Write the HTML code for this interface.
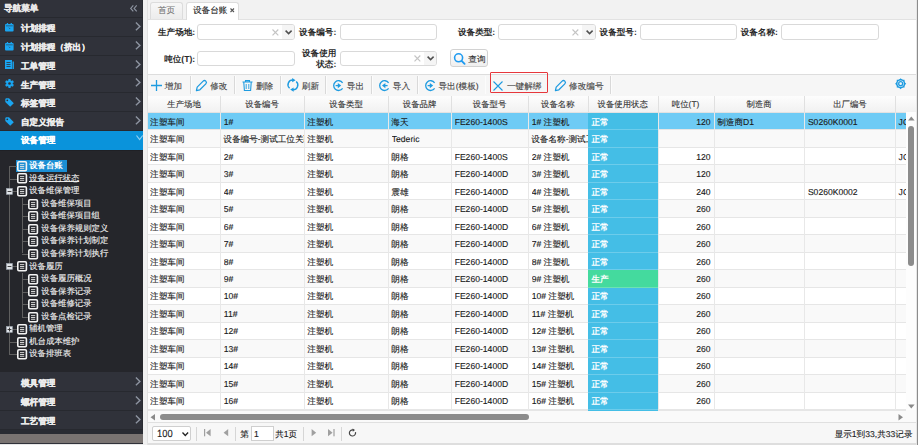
<!DOCTYPE html><html><head><meta charset="utf-8"><style>
*{box-sizing:border-box;margin:0;padding:0}
html,body{width:918px;height:445px;overflow:hidden;background:#fff}
body{position:relative;-webkit-text-stroke:0.12px currentColor;font-family:"Liberation Sans",sans-serif;font-size:8.6px;text-rendering:geometricPrecision;color:#222}
.ab{position:absolute}
.t{position:absolute;white-space:nowrap;line-height:10px}
.b{font-weight:bold;-webkit-text-stroke:0}
svg{position:absolute;overflow:visible}
</style></head><body>
<div class="ab" style="left:0px;top:0px;width:143px;height:445px;background:#30323a"></div>
<div class="ab" style="left:141.9px;top:0px;width:1.1px;height:445px;background:#2a2c32"></div>
<div class="ab" style="left:0px;top:17.4px;width:143px;height:1px;background:#27292f"></div>
<div class="t" style="left:4px;top:3.1px;color:#e9e9e9;font-weight:bold;-webkit-text-stroke:0.25px #e9e9e9">导航菜单</div>
<svg style="left:130px;top:5px;" width="8" height="7" viewBox="0 0 8 7"><path d="M3.3 0.4 L0.7 3.4 L3.3 6.4 M6.7 0.4 L4.1 3.4 L6.7 6.4" fill="none" stroke="#8d94a1" stroke-width="1.15"/></svg>
<div class="ab" style="left:0px;top:35.900000000000006px;width:143px;height:1px;background:#27292f"></div>
<svg style="left:4.8px;top:22.8px;" width="9" height="8" viewBox="0 0 9 8"><rect x="0" y="1" width="8.6" height="7.6" rx="1" fill="#1aa5f1"/><rect x="1.8" y="0" width="1.3" height="2" fill="#1aa5f1"/><rect x="5.6" y="0" width="1.3" height="2" fill="#1aa5f1"/><rect x="0.8" y="2.6" width="7" height="0.6" fill="#30323a"/><path d="M4 4.8 L5 5.8" stroke="#30323a" stroke-width="0.8"/></svg>
<div class="t" style="left:21px;top:23.1px;color:#ececec;font-weight:bold;-webkit-text-stroke:0.25px #ececec">计划排程</div>
<svg style="left:135.1px;top:22.0px;" width="6" height="9" viewBox="0 0 6 9"><path d="M0.9 0.6 L4.9 4.4 L0.9 8.2" fill="none" stroke="#8d94a1" stroke-width="1.4"/></svg>
<div class="ab" style="left:0px;top:54.730000000000004px;width:143px;height:1px;background:#27292f"></div>
<svg style="left:4.8px;top:41.63px;" width="9" height="8" viewBox="0 0 9 8"><rect x="0" y="1" width="8.6" height="7.6" rx="1" fill="#1aa5f1"/><rect x="1.8" y="0" width="1.3" height="2" fill="#1aa5f1"/><rect x="5.6" y="0" width="1.3" height="2" fill="#1aa5f1"/><rect x="0.8" y="2.6" width="7" height="0.6" fill="#30323a"/><path d="M4 4.8 L5 5.8" stroke="#30323a" stroke-width="0.8"/></svg>
<div class="t" style="left:21px;top:41.93px;color:#ececec;font-weight:bold;-webkit-text-stroke:0.25px #ececec">计划排程（挤出）</div>
<svg style="left:135.1px;top:40.83px;" width="6" height="9" viewBox="0 0 6 9"><path d="M0.9 0.6 L4.9 4.4 L0.9 8.2" fill="none" stroke="#8d94a1" stroke-width="1.4"/></svg>
<div class="ab" style="left:0px;top:73.56px;width:143px;height:1px;background:#27292f"></div>
<svg style="left:4.8px;top:60.46px;" width="9" height="9" viewBox="0 0 9 9"><rect x="0" y="0" width="7" height="9" fill="#1aa5f1"/><rect x="7.5" y="1.5" width="1.4" height="7.5" fill="#1aa5f1"/><rect x="1.5" y="2" width="4" height="0.8" fill="#30323a"/><rect x="1.5" y="4" width="4" height="0.8" fill="#30323a"/><rect x="1.5" y="6" width="4" height="0.8" fill="#30323a"/></svg>
<div class="t" style="left:21px;top:60.76px;color:#ececec;font-weight:bold;-webkit-text-stroke:0.25px #ececec">工单管理</div>
<svg style="left:135.1px;top:59.66px;" width="6" height="9" viewBox="0 0 6 9"><path d="M0.9 0.6 L4.9 4.4 L0.9 8.2" fill="none" stroke="#8d94a1" stroke-width="1.4"/></svg>
<div class="ab" style="left:0px;top:92.39px;width:143px;height:1px;background:#27292f"></div>
<svg style="left:4.8px;top:79.29px;" width="9" height="9" viewBox="0 0 9 9"><g transform="translate(4.5,4.5)"><circle r="3.2" fill="#1aa5f1"/><rect x="-1.1" y="-4.5" width="2.2" height="2.5" fill="#1aa5f1" transform="rotate(0)"/><rect x="-1.1" y="-4.5" width="2.2" height="2.5" fill="#1aa5f1" transform="rotate(60)"/><rect x="-1.1" y="-4.5" width="2.2" height="2.5" fill="#1aa5f1" transform="rotate(120)"/><rect x="-1.1" y="-4.5" width="2.2" height="2.5" fill="#1aa5f1" transform="rotate(180)"/><rect x="-1.1" y="-4.5" width="2.2" height="2.5" fill="#1aa5f1" transform="rotate(240)"/><rect x="-1.1" y="-4.5" width="2.2" height="2.5" fill="#1aa5f1" transform="rotate(300)"/><circle r="1.3" fill="#30323a"/></g></svg>
<div class="t" style="left:21px;top:79.59px;color:#ececec;font-weight:bold;-webkit-text-stroke:0.25px #ececec">生产管理</div>
<svg style="left:135.1px;top:78.49000000000001px;" width="6" height="9" viewBox="0 0 6 9"><path d="M0.9 0.6 L4.9 4.4 L0.9 8.2" fill="none" stroke="#8d94a1" stroke-width="1.4"/></svg>
<div class="ab" style="left:0px;top:111.21999999999998px;width:143px;height:1px;background:#27292f"></div>
<svg style="left:4.8px;top:98.11999999999999px;" width="9" height="9" viewBox="0 0 9 9"><path d="M0.3 1 L0.3 4 L5.2 8.8 L8.8 5.2 L4 0.3 L1 0.3 Z" fill="#1aa5f1"/><circle cx="2.3" cy="2.3" r="0.9" fill="#30323a"/></svg>
<div class="t" style="left:21px;top:98.41999999999999px;color:#ececec;font-weight:bold;-webkit-text-stroke:0.25px #ececec">标签管理</div>
<svg style="left:135.1px;top:97.32px;" width="6" height="9" viewBox="0 0 6 9"><path d="M0.9 0.6 L4.9 4.4 L0.9 8.2" fill="none" stroke="#8d94a1" stroke-width="1.4"/></svg>
<div class="ab" style="left:0px;top:130.05px;width:143px;height:1px;background:#27292f"></div>
<svg style="left:4.8px;top:116.95px;" width="9" height="9" viewBox="0 0 9 9"><path d="M0.3 1 L0.3 4 L5.2 8.8 L8.8 5.2 L4 0.3 L1 0.3 Z" fill="#1aa5f1"/><circle cx="2.3" cy="2.3" r="0.9" fill="#30323a"/></svg>
<div class="t" style="left:21px;top:117.25px;color:#ececec;font-weight:bold;-webkit-text-stroke:0.25px #ececec">自定义报告</div>
<svg style="left:135.1px;top:116.15px;" width="6" height="9" viewBox="0 0 6 9"><path d="M0.9 0.6 L4.9 4.4 L0.9 8.2" fill="none" stroke="#8d94a1" stroke-width="1.4"/></svg>
<div class="ab" style="left:0px;top:130.7px;width:143px;height:18.9px;background:#0a93db"></div>
<div class="t" style="left:21px;top:135.3px;color:#fff;font-weight:bold;-webkit-text-stroke:0.25px #fff">设备管理</div>
<svg style="left:136.3px;top:134.8px;" width="8" height="6" viewBox="0 0 8 6"><path d="M0.5 0.5 L3.6 4.6 L6.7 0.5" fill="none" stroke="#8fd0f2" stroke-width="1.2"/></svg>
<div class="ab" style="left:0px;top:149.6px;width:143px;height:1.2px;background:#1f2025"></div>
<div class="ab" style="left:0px;top:150.8px;width:143px;height:221.7px;background:#25262b"></div>
<div class="ab" style="left:8.8px;top:166px;width:0.9px;height:188.39999999999998px;background:#5f5f5f"></div>
<div class="ab" style="left:21.8px;top:198px;width:0.9px;height:55.400000000000006px;background:#5f5f5f"></div>
<div class="ab" style="left:21.8px;top:272.9px;width:0.9px;height:43.700000000000045px;background:#5f5f5f"></div>
<div class="ab" style="left:16.2px;top:159.9px;width:50.6px;height:12.4px;background:#1b8ed3"></div>
<div class="ab" style="left:8.8px;top:166.0px;width:8.7px;height:0.9px;background:#5f5f5f"></div>
<svg style="left:17.2px;top:161.0px;" width="10" height="10.5" viewBox="0 0 10 10.5"><rect x="0.8" y="0.8" width="8.6" height="8.9" rx="1.1" fill="#1b8ed3" stroke="#f4f4f4" stroke-width="1.6"/><rect x="3" y="3.2" width="4.2" height="0.9" fill="#e6e6e6"/><rect x="3" y="5.0" width="4.2" height="0.9" fill="#e6e6e6"/><rect x="3" y="6.8" width="4.2" height="0.9" fill="#e6e6e6"/></svg>
<div class="t" style="left:29.2px;top:160.1px;color:#fff;font-weight:bold;font-size:8.4px;-webkit-text-stroke:0">设备台账</div>
<div class="ab" style="left:8.8px;top:178.55px;width:8.7px;height:0.9px;background:#5f5f5f"></div>
<svg style="left:17.0px;top:173.45px;" width="10" height="10.5" viewBox="0 0 10 10.5"><rect x="0.8" y="0.8" width="8.6" height="8.9" rx="1.1" fill="#25262b" stroke="#f4f4f4" stroke-width="1.6"/><rect x="3" y="3.2" width="4.2" height="0.9" fill="#e6e6e6"/><rect x="3" y="5.0" width="4.2" height="0.9" fill="#e6e6e6"/><rect x="3" y="6.8" width="4.2" height="0.9" fill="#e6e6e6"/></svg>
<div class="ab" style="left:29px;top:180.9px;width:49.6px;height:0.9px;background:#e8e8e8"></div>
<div class="t" style="left:29.2px;top:172.65px;color:#f0f0f0;font-size:8.4px">设备运行状态</div>
<div class="ab" style="left:8.8px;top:191.1px;width:8.7px;height:0.9px;background:#5f5f5f"></div>
<svg style="left:17.0px;top:185.99999999999997px;" width="10" height="10.5" viewBox="0 0 10 10.5"><rect x="0.8" y="0.8" width="8.6" height="8.9" rx="1.1" fill="#25262b" stroke="#f4f4f4" stroke-width="1.6"/><rect x="3" y="3.2" width="4.2" height="0.9" fill="#e6e6e6"/><rect x="3" y="5.0" width="4.2" height="0.9" fill="#e6e6e6"/><rect x="3" y="6.8" width="4.2" height="0.9" fill="#e6e6e6"/></svg>
<div class="t" style="left:29.2px;top:185.2px;color:#f0f0f0;font-size:8.4px">设备维保管理</div>
<svg style="left:6.2px;top:188.1px;" width="7" height="7" viewBox="0 0 7 7"><rect x="0.4" y="0.4" width="6" height="6" fill="#dfe3e8" stroke="#9aa3ad" stroke-width="0.6"/><rect x="1.6" y="3" width="3.8" height="0.9" fill="#333"/></svg>
<div class="ab" style="left:21.8px;top:203.65px;width:7.0px;height:0.9px;background:#5f5f5f"></div>
<svg style="left:28.3px;top:198.54999999999998px;" width="10" height="10.5" viewBox="0 0 10 10.5"><rect x="0.8" y="0.8" width="8.6" height="8.9" rx="1.1" fill="#25262b" stroke="#f4f4f4" stroke-width="1.6"/><rect x="3" y="3.2" width="4.2" height="0.9" fill="#e6e6e6"/><rect x="3" y="5.0" width="4.2" height="0.9" fill="#e6e6e6"/><rect x="3" y="6.8" width="4.2" height="0.9" fill="#e6e6e6"/></svg>
<div class="t" style="left:41.3px;top:197.75px;color:#f0f0f0;font-size:8.4px">设备维保项目</div>
<div class="ab" style="left:21.8px;top:216.2px;width:7.0px;height:0.9px;background:#5f5f5f"></div>
<svg style="left:28.3px;top:211.09999999999997px;" width="10" height="10.5" viewBox="0 0 10 10.5"><rect x="0.8" y="0.8" width="8.6" height="8.9" rx="1.1" fill="#25262b" stroke="#f4f4f4" stroke-width="1.6"/><rect x="3" y="3.2" width="4.2" height="0.9" fill="#e6e6e6"/><rect x="3" y="5.0" width="4.2" height="0.9" fill="#e6e6e6"/><rect x="3" y="6.8" width="4.2" height="0.9" fill="#e6e6e6"/></svg>
<div class="t" style="left:41.3px;top:210.29999999999998px;color:#f0f0f0;font-size:8.4px">设备维保项目组</div>
<div class="ab" style="left:21.8px;top:228.75px;width:7.0px;height:0.9px;background:#5f5f5f"></div>
<svg style="left:28.3px;top:223.64999999999998px;" width="10" height="10.5" viewBox="0 0 10 10.5"><rect x="0.8" y="0.8" width="8.6" height="8.9" rx="1.1" fill="#25262b" stroke="#f4f4f4" stroke-width="1.6"/><rect x="3" y="3.2" width="4.2" height="0.9" fill="#e6e6e6"/><rect x="3" y="5.0" width="4.2" height="0.9" fill="#e6e6e6"/><rect x="3" y="6.8" width="4.2" height="0.9" fill="#e6e6e6"/></svg>
<div class="t" style="left:41.3px;top:222.85px;color:#f0f0f0;font-size:8.4px">设备保养规则定义</div>
<div class="ab" style="left:21.8px;top:241.3px;width:7.0px;height:0.9px;background:#5f5f5f"></div>
<svg style="left:28.3px;top:236.2px;" width="10" height="10.5" viewBox="0 0 10 10.5"><rect x="0.8" y="0.8" width="8.6" height="8.9" rx="1.1" fill="#25262b" stroke="#f4f4f4" stroke-width="1.6"/><rect x="3" y="3.2" width="4.2" height="0.9" fill="#e6e6e6"/><rect x="3" y="5.0" width="4.2" height="0.9" fill="#e6e6e6"/><rect x="3" y="6.8" width="4.2" height="0.9" fill="#e6e6e6"/></svg>
<div class="t" style="left:41.3px;top:235.4px;color:#f0f0f0;font-size:8.4px">设备保养计划制定</div>
<div class="ab" style="left:21.8px;top:253.85000000000002px;width:7.0px;height:0.9px;background:#5f5f5f"></div>
<svg style="left:28.3px;top:248.75px;" width="10" height="10.5" viewBox="0 0 10 10.5"><rect x="0.8" y="0.8" width="8.6" height="8.9" rx="1.1" fill="#25262b" stroke="#f4f4f4" stroke-width="1.6"/><rect x="3" y="3.2" width="4.2" height="0.9" fill="#e6e6e6"/><rect x="3" y="5.0" width="4.2" height="0.9" fill="#e6e6e6"/><rect x="3" y="6.8" width="4.2" height="0.9" fill="#e6e6e6"/></svg>
<div class="t" style="left:41.3px;top:247.95000000000002px;color:#f0f0f0;font-size:8.4px">设备保养计划执行</div>
<div class="ab" style="left:8.8px;top:266.40000000000003px;width:8.7px;height:0.9px;background:#5f5f5f"></div>
<svg style="left:17.0px;top:261.3px;" width="10" height="10.5" viewBox="0 0 10 10.5"><rect x="0.8" y="0.8" width="8.6" height="8.9" rx="1.1" fill="#25262b" stroke="#f4f4f4" stroke-width="1.6"/><rect x="3" y="3.2" width="4.2" height="0.9" fill="#e6e6e6"/><rect x="3" y="5.0" width="4.2" height="0.9" fill="#e6e6e6"/><rect x="3" y="6.8" width="4.2" height="0.9" fill="#e6e6e6"/></svg>
<div class="t" style="left:29.2px;top:260.5px;color:#f0f0f0;font-size:8.4px">设备履历</div>
<svg style="left:6.2px;top:263.40000000000003px;" width="7" height="7" viewBox="0 0 7 7"><rect x="0.4" y="0.4" width="6" height="6" fill="#dfe3e8" stroke="#9aa3ad" stroke-width="0.6"/><rect x="1.6" y="3" width="3.8" height="0.9" fill="#333"/></svg>
<div class="ab" style="left:21.8px;top:278.95px;width:7.0px;height:0.9px;background:#5f5f5f"></div>
<svg style="left:28.3px;top:273.84999999999997px;" width="10" height="10.5" viewBox="0 0 10 10.5"><rect x="0.8" y="0.8" width="8.6" height="8.9" rx="1.1" fill="#25262b" stroke="#f4f4f4" stroke-width="1.6"/><rect x="3" y="3.2" width="4.2" height="0.9" fill="#e6e6e6"/><rect x="3" y="5.0" width="4.2" height="0.9" fill="#e6e6e6"/><rect x="3" y="6.8" width="4.2" height="0.9" fill="#e6e6e6"/></svg>
<div class="t" style="left:41.3px;top:273.04999999999995px;color:#f0f0f0;font-size:8.4px">设备履历概况</div>
<div class="ab" style="left:21.8px;top:291.5px;width:7.0px;height:0.9px;background:#5f5f5f"></div>
<svg style="left:28.3px;top:286.4px;" width="10" height="10.5" viewBox="0 0 10 10.5"><rect x="0.8" y="0.8" width="8.6" height="8.9" rx="1.1" fill="#25262b" stroke="#f4f4f4" stroke-width="1.6"/><rect x="3" y="3.2" width="4.2" height="0.9" fill="#e6e6e6"/><rect x="3" y="5.0" width="4.2" height="0.9" fill="#e6e6e6"/><rect x="3" y="6.8" width="4.2" height="0.9" fill="#e6e6e6"/></svg>
<div class="t" style="left:41.3px;top:285.59999999999997px;color:#f0f0f0;font-size:8.4px">设备保养记录</div>
<div class="ab" style="left:21.8px;top:304.05px;width:7.0px;height:0.9px;background:#5f5f5f"></div>
<svg style="left:28.3px;top:298.95px;" width="10" height="10.5" viewBox="0 0 10 10.5"><rect x="0.8" y="0.8" width="8.6" height="8.9" rx="1.1" fill="#25262b" stroke="#f4f4f4" stroke-width="1.6"/><rect x="3" y="3.2" width="4.2" height="0.9" fill="#e6e6e6"/><rect x="3" y="5.0" width="4.2" height="0.9" fill="#e6e6e6"/><rect x="3" y="6.8" width="4.2" height="0.9" fill="#e6e6e6"/></svg>
<div class="t" style="left:41.3px;top:298.15px;color:#f0f0f0;font-size:8.4px">设备维修记录</div>
<div class="ab" style="left:21.8px;top:316.6px;width:7.0px;height:0.9px;background:#5f5f5f"></div>
<svg style="left:28.3px;top:311.5px;" width="10" height="10.5" viewBox="0 0 10 10.5"><rect x="0.8" y="0.8" width="8.6" height="8.9" rx="1.1" fill="#25262b" stroke="#f4f4f4" stroke-width="1.6"/><rect x="3" y="3.2" width="4.2" height="0.9" fill="#e6e6e6"/><rect x="3" y="5.0" width="4.2" height="0.9" fill="#e6e6e6"/><rect x="3" y="6.8" width="4.2" height="0.9" fill="#e6e6e6"/></svg>
<div class="t" style="left:41.3px;top:310.7px;color:#f0f0f0;font-size:8.4px">设备点检记录</div>
<div class="ab" style="left:8.8px;top:329.15000000000003px;width:8.7px;height:0.9px;background:#5f5f5f"></div>
<svg style="left:17.0px;top:324.05px;" width="10" height="10.5" viewBox="0 0 10 10.5"><rect x="0.8" y="0.8" width="8.6" height="8.9" rx="1.1" fill="#25262b" stroke="#f4f4f4" stroke-width="1.6"/><rect x="3" y="3.2" width="4.2" height="0.9" fill="#e6e6e6"/><rect x="3" y="5.0" width="4.2" height="0.9" fill="#e6e6e6"/><rect x="3" y="6.8" width="4.2" height="0.9" fill="#e6e6e6"/></svg>
<div class="t" style="left:29.2px;top:323.25px;color:#f0f0f0;font-size:8.4px">辅机管理</div>
<svg style="left:6.2px;top:326.15000000000003px;" width="7" height="7" viewBox="0 0 7 7"><rect x="0.4" y="0.4" width="6" height="6" fill="#dfe3e8" stroke="#9aa3ad" stroke-width="0.6"/><rect x="1.6" y="3" width="3.8" height="0.9" fill="#333"/><rect x="3" y="1.6" width="0.9" height="3.8" fill="#333"/></svg>
<div class="ab" style="left:8.8px;top:341.7px;width:8.7px;height:0.9px;background:#5f5f5f"></div>
<svg style="left:17.0px;top:336.59999999999997px;" width="10" height="10.5" viewBox="0 0 10 10.5"><rect x="0.8" y="0.8" width="8.6" height="8.9" rx="1.1" fill="#25262b" stroke="#f4f4f4" stroke-width="1.6"/><rect x="3" y="3.2" width="4.2" height="0.9" fill="#e6e6e6"/><rect x="3" y="5.0" width="4.2" height="0.9" fill="#e6e6e6"/><rect x="3" y="6.8" width="4.2" height="0.9" fill="#e6e6e6"/></svg>
<div class="t" style="left:29.2px;top:335.79999999999995px;color:#f0f0f0;font-size:8.4px">机台成本维护</div>
<div class="ab" style="left:8.8px;top:354.25px;width:8.7px;height:0.9px;background:#5f5f5f"></div>
<svg style="left:17.0px;top:349.15px;" width="10" height="10.5" viewBox="0 0 10 10.5"><rect x="0.8" y="0.8" width="8.6" height="8.9" rx="1.1" fill="#25262b" stroke="#f4f4f4" stroke-width="1.6"/><rect x="3" y="3.2" width="4.2" height="0.9" fill="#e6e6e6"/><rect x="3" y="5.0" width="4.2" height="0.9" fill="#e6e6e6"/><rect x="3" y="6.8" width="4.2" height="0.9" fill="#e6e6e6"/></svg>
<div class="t" style="left:29.2px;top:348.34999999999997px;color:#f0f0f0;font-size:8.4px">设备排班表</div>
<div class="ab" style="left:0px;top:391.0px;width:143px;height:1px;background:#27292f"></div>
<div class="t" style="left:21px;top:378.3px;color:#ececec;font-weight:bold;-webkit-text-stroke:0.25px #ececec">模具管理</div>
<svg style="left:135.1px;top:376.9px;" width="6" height="9" viewBox="0 0 6 9"><path d="M0.9 0.6 L4.9 4.4 L0.9 8.2" fill="none" stroke="#8d94a1" stroke-width="1.4"/></svg>
<div class="ab" style="left:0px;top:410.0px;width:143px;height:1px;background:#27292f"></div>
<div class="t" style="left:21px;top:397.3px;color:#ececec;font-weight:bold;-webkit-text-stroke:0.25px #ececec">螺杆管理</div>
<svg style="left:135.1px;top:395.9px;" width="6" height="9" viewBox="0 0 6 9"><path d="M0.9 0.6 L4.9 4.4 L0.9 8.2" fill="none" stroke="#8d94a1" stroke-width="1.4"/></svg>
<div class="ab" style="left:0px;top:429.0px;width:143px;height:1px;background:#27292f"></div>
<div class="t" style="left:21px;top:416.3px;color:#ececec;font-weight:bold;-webkit-text-stroke:0.25px #ececec">工艺管理</div>
<svg style="left:135.1px;top:414.9px;" width="6" height="9" viewBox="0 0 6 9"><path d="M0.9 0.6 L4.9 4.4 L0.9 8.2" fill="none" stroke="#8d94a1" stroke-width="1.4"/></svg>
<div class="ab" style="left:0px;top:429.5px;width:143px;height:4.3px;background:#2a2c33"></div>
<div class="ab" style="left:0px;top:433.8px;width:143px;height:9.7px;background:#7a7472"></div>
<div class="ab" style="left:0px;top:443.5px;width:143px;height:1.5px;background:#e9e9e9"></div>
<div class="ab" style="left:143px;top:0px;width:4.5px;height:445px;background:#f0f0f0"></div>
<div class="ab" style="left:147px;top:0px;width:0.9px;height:445px;background:#e2e2e2"></div>
<div class="ab" style="left:916px;top:0px;width:1px;height:445px;background:#e6e6e6"></div>
<div class="ab" style="left:917px;top:0px;width:1px;height:445px;background:#8c8c8c"></div>
<div class="ab" style="left:148px;top:0px;width:768px;height:19px;background:#f2f2f2"></div>
<div class="ab" style="left:148px;top:18.5px;width:768px;height:1px;background:#e2e2e2"></div>
<div class="ab" style="left:150.4px;top:1.6px;width:32.2px;height:17.2px;background:linear-gradient(#f7f7f7,#ececec);border:1px solid #dcdcdc;border-bottom:none;border-radius:3px 3px 0 0"></div>
<div class="t" style="left:158px;top:4.6px;color:#7a7a7a">首页</div>
<div class="ab" style="left:185.8px;top:1.5px;width:53.4px;height:18px;background:#fff;border:1px solid #dcdcdc;border-bottom:none;border-radius:3px 3px 0 0"></div>
<div class="t" style="left:193px;top:4.6px;color:#222">设备台账</div>
<svg style="left:230.2px;top:8.1px;" width="5" height="5" viewBox="0 0 5 5"><path d="M0.5 0.5 L4 4 M4 0.5 L0.5 4" stroke="#555" stroke-width="1.1"/></svg>
<div class="t" style="right:722.8px;top:27.1px;color:#2a2a2a;font-weight:bold;-webkit-text-stroke:0">生产场地:</div>
<div class="ab" style="left:197.3px;top:24.4px;width:97.69999999999999px;height:15.300000000000004px;background:#fff;border:1px solid #d9d9d9;border-radius:3px"></div>
<div class="ab" style="left:281.5px;top:25.4px;width:12.5px;height:13.300000000000004px;background:#f5f5f5;border-radius:0 2px 2px 0"></div>
<svg style="left:271.8px;top:28.65px;" width="7" height="7" viewBox="0 0 7 7"><path d="M0.5 0.5 L6.3 6.3 M6.3 0.5 L0.5 6.3" stroke="#c4c4c4" stroke-width="1.15"/></svg>
<svg style="left:285.0px;top:29.749999999999996px;" width="8" height="5" viewBox="0 0 8 5"><path d="M0.6 0.6 L3.6 3.6 L6.6 0.6" fill="none" stroke="#505050" stroke-width="1.5"/></svg>
<div class="t" style="right:581.7px;top:27.1px;color:#2a2a2a;font-weight:bold;-webkit-text-stroke:0">设备编号:</div>
<div class="ab" style="left:339.7px;top:24.4px;width:97.30000000000001px;height:15.300000000000004px;background:#fff;border:1px solid #d9d9d9;border-radius:3px"></div>
<div class="t" style="right:422.8px;top:27.1px;color:#2a2a2a;font-weight:bold;-webkit-text-stroke:0">设备类型:</div>
<div class="ab" style="left:497.5px;top:24.4px;width:98.0px;height:15.300000000000004px;background:#fff;border:1px solid #d9d9d9;border-radius:3px"></div>
<div class="ab" style="left:582.0px;top:25.4px;width:12.5px;height:13.300000000000004px;background:#f5f5f5;border-radius:0 2px 2px 0"></div>
<svg style="left:572.3px;top:28.65px;" width="7" height="7" viewBox="0 0 7 7"><path d="M0.5 0.5 L6.3 6.3 M6.3 0.5 L0.5 6.3" stroke="#c4c4c4" stroke-width="1.15"/></svg>
<svg style="left:585.5px;top:29.749999999999996px;" width="8" height="5" viewBox="0 0 8 5"><path d="M0.6 0.6 L3.6 3.6 L6.6 0.6" fill="none" stroke="#505050" stroke-width="1.5"/></svg>
<div class="t" style="right:281.20000000000005px;top:27.1px;color:#2a2a2a;font-weight:bold;-webkit-text-stroke:0">设备型号:</div>
<div class="ab" style="left:639.5px;top:24.4px;width:97.79999999999995px;height:15.300000000000004px;background:#fff;border:1px solid #d9d9d9;border-radius:3px"></div>
<div class="t" style="right:140.10000000000002px;top:27.1px;color:#2a2a2a;font-weight:bold;-webkit-text-stroke:0">设备名称:</div>
<div class="ab" style="left:781.2px;top:24.4px;width:97.59999999999991px;height:15.300000000000004px;background:#fff;border:1px solid #d9d9d9;border-radius:3px"></div>
<div class="t" style="right:722.8px;top:54.2px;color:#2a2a2a;font-weight:bold;-webkit-text-stroke:0">吨位(T):</div>
<div class="ab" style="left:197.3px;top:51px;width:97.69999999999999px;height:15px;background:#fff;border:1px solid #d9d9d9;border-radius:3px"></div>
<div class="t" style="right:581.7px;top:48.4px;color:#2a2a2a;font-weight:bold;-webkit-text-stroke:0">设备使用</div>
<div class="t" style="right:581.7px;top:59.3px;color:#2a2a2a;font-weight:bold;-webkit-text-stroke:0">状态:</div>
<div class="ab" style="left:339.7px;top:50.7px;width:97.30000000000001px;height:15.299999999999997px;background:#fff;border:1px solid #d9d9d9;border-radius:3px"></div>
<div class="ab" style="left:423.5px;top:51.7px;width:12.5px;height:13.299999999999997px;background:#f5f5f5;border-radius:0 2px 2px 0"></div>
<svg style="left:413.8px;top:54.95px;" width="7" height="7" viewBox="0 0 7 7"><path d="M0.5 0.5 L6.3 6.3 M6.3 0.5 L0.5 6.3" stroke="#c4c4c4" stroke-width="1.15"/></svg>
<svg style="left:427.0px;top:56.050000000000004px;" width="8" height="5" viewBox="0 0 8 5"><path d="M0.6 0.6 L3.6 3.6 L6.6 0.6" fill="none" stroke="#505050" stroke-width="1.5"/></svg>
<div class="ab" style="left:450.4px;top:49.2px;width:38px;height:18px;background:linear-gradient(#ffffff,#efefef);border:1.2px solid #d2d2d2;border-radius:3px"></div>
<svg style="left:453.6px;top:52.6px;" width="12" height="12" viewBox="0 0 12 12"><circle cx="4.6" cy="4.8" r="4.0" fill="none" stroke="#1f9bf0" stroke-width="1.6"/><path d="M7.6 7.8 L10.6 10.8" stroke="#1f9bf0" stroke-width="1.9" stroke-linecap="round"/></svg>
<div class="t" style="left:468.3px;top:54.4px;color:#333">查询</div>
<div class="ab" style="left:148px;top:74px;width:768px;height:22px;background:#f6f6f6"></div>
<div class="ab" style="left:148px;top:73.6px;width:768px;height:0.9px;background:#dddddd"></div>
<div class="ab" style="left:189.7px;top:76px;width:0.9px;height:17.6px;background:#d9d9d9"></div>
<div class="ab" style="left:190.6px;top:76px;width:0.8px;height:17.6px;background:#fcfcfc"></div>
<div class="ab" style="left:234.3px;top:76px;width:0.9px;height:17.6px;background:#d9d9d9"></div>
<div class="ab" style="left:235.20000000000002px;top:76px;width:0.8px;height:17.6px;background:#fcfcfc"></div>
<div class="ab" style="left:280px;top:76px;width:0.9px;height:17.6px;background:#d9d9d9"></div>
<div class="ab" style="left:280.9px;top:76px;width:0.8px;height:17.6px;background:#fcfcfc"></div>
<div class="ab" style="left:325px;top:76px;width:0.9px;height:17.6px;background:#d9d9d9"></div>
<div class="ab" style="left:325.9px;top:76px;width:0.8px;height:17.6px;background:#fcfcfc"></div>
<div class="ab" style="left:371.2px;top:76px;width:0.9px;height:17.6px;background:#d9d9d9"></div>
<div class="ab" style="left:372.09999999999997px;top:76px;width:0.8px;height:17.6px;background:#fcfcfc"></div>
<div class="ab" style="left:417px;top:76px;width:0.9px;height:17.6px;background:#d9d9d9"></div>
<div class="ab" style="left:417.9px;top:76px;width:0.8px;height:17.6px;background:#fcfcfc"></div>
<div class="ab" style="left:484.5px;top:76px;width:0.9px;height:17.6px;background:#d9d9d9"></div>
<div class="ab" style="left:485.4px;top:76px;width:0.8px;height:17.6px;background:#fcfcfc"></div>
<div class="ab" style="left:609.6px;top:76px;width:0.9px;height:17.6px;background:#d9d9d9"></div>
<div class="ab" style="left:610.5px;top:76px;width:0.8px;height:17.6px;background:#fcfcfc"></div>
<svg style="left:151px;top:80px;" width="11" height="11" viewBox="0 0 11 11"><path d="M5.5 0 V11 M0 5.5 H11" stroke="#1e9be0" stroke-width="1.3"/></svg>
<div class="t" style="left:164.8px;top:81.4px;color:#444">增加</div>
<svg style="left:195.2px;top:80.8px;" width="12" height="11" viewBox="0 0 12 11"><g transform="translate(5.8,5.2) rotate(45)"><path d="M-1.9 -5.2 A1.9 1.9 0 0 1 1.9 -5.2 V3.2 L0 6.2 L-1.9 3.2 Z" fill="none" stroke="#1e9be0" stroke-width="1.25" stroke-linejoin="round"/></g></svg>
<div class="t" style="left:210.2px;top:81.4px;color:#444">修改</div>
<svg style="left:242px;top:79.5px;" width="11" height="11" viewBox="0 0 11 11"><path d="M0.5 2 H10.5 M3.5 2 V0.6 H7.5 V2 M1.8 2.5 L2.4 10.5 H8.6 L9.2 2.5" fill="none" stroke="#1e9be0" stroke-width="1.1"/><path d="M4.2 4 V9 M6.8 4 V9" stroke="#1e9be0" stroke-width="0.9"/></svg>
<div class="t" style="left:256px;top:81.4px;color:#444">删除</div>
<svg style="left:287.2px;top:79.4px;" width="12" height="12" viewBox="0 0 12 12"><path d="M6.2 1.1 A4.7 4.7 0 0 0 2.6 9.3" fill="none" stroke="#1e9be0" stroke-width="1.4"/><path d="M5.6 10.7 A4.7 4.7 0 0 0 9.2 2.5" fill="none" stroke="#1e9be0" stroke-width="1.4"/><path d="M5.2 -0.9 L8.6 1.2 L5.2 3.3 Z" fill="#1e9be0"/><path d="M6.6 8.5 L3.2 10.6 L6.6 12.7 Z" fill="#1e9be0"/></svg>
<div class="t" style="left:301.8px;top:81.4px;color:#444">刷新</div>
<svg style="left:333.2px;top:79.5px;" width="12" height="12" viewBox="0 0 12 12"><path d="M9.61 2.79 A4.9 4.9 0 1 0 9.61 8.41" fill="none" stroke="#1e9be0" stroke-width="1.3"/><path d="M4.8 3.0 L8.2 5.6 L4.8 8.2 Z" fill="#1e9be0"/><rect x="2.6" y="4.95" width="3.6" height="1.3" fill="#1e9be0"/></svg>
<div class="t" style="left:346.8px;top:81.4px;color:#444">导出</div>
<svg style="left:378.8px;top:79.5px;" width="12" height="12" viewBox="0 0 12 12"><path d="M9.61 2.79 A4.9 4.9 0 1 0 9.61 8.41" fill="none" stroke="#1e9be0" stroke-width="1.3"/><path d="M6.4 3.0 L3.0 5.6 L6.4 8.2 Z" fill="#1e9be0"/><rect x="5" y="4.95" width="3.6" height="1.3" fill="#1e9be0"/></svg>
<div class="t" style="left:392.8px;top:81.4px;color:#444">导入</div>
<svg style="left:424.6px;top:79.5px;" width="12" height="12" viewBox="0 0 12 12"><path d="M9.61 2.79 A4.9 4.9 0 1 0 9.61 8.41" fill="none" stroke="#1e9be0" stroke-width="1.3"/><path d="M4.8 3.0 L8.2 5.6 L4.8 8.2 Z" fill="#1e9be0"/><rect x="2.6" y="4.95" width="3.6" height="1.3" fill="#1e9be0"/></svg>
<div class="t" style="left:438.5px;top:81.4px;color:#444">导出(模板)</div>
<div class="ab" style="left:490px;top:72.2px;width:57.8px;height:21.3px;border:1.1px solid #e6373c;border-radius:1px"></div>
<svg style="left:493px;top:80.8px;" width="10" height="10" viewBox="0 0 10 10"><path d="M0.5 0.5 L9.5 9.5 M9.5 0.5 L0.5 9.5" stroke="#1e9be0" stroke-width="1.1"/></svg>
<div class="t" style="left:507px;top:81.4px;color:#444">一键解绑</div>
<svg style="left:553.8px;top:80.8px;" width="12" height="11" viewBox="0 0 12 11"><g transform="translate(5.8,5.2) rotate(45)"><path d="M-1.9 -5.2 A1.9 1.9 0 0 1 1.9 -5.2 V3.2 L0 6.2 L-1.9 3.2 Z" fill="none" stroke="#1e9be0" stroke-width="1.25" stroke-linejoin="round"/></g></svg>
<div class="t" style="left:569.1px;top:81.4px;color:#444">修改编号</div>
<svg style="left:894.9px;top:78.0px;" width="12" height="12" viewBox="0 0 12 12"><g transform="translate(5.65,5.65)"><rect x="-3.9" y="-3.9" width="7.8" height="7.8" fill="#1e9be0"/><rect x="-3.9" y="-3.9" width="7.8" height="7.8" fill="#1e9be0" transform="rotate(45)"/><circle r="4.3" fill="#1e9be0"/><circle r="3.1" fill="#f6f6f6"/><circle r="1.95" fill="none" stroke="#1e9be0" stroke-width="1.3"/></g></svg>
<div class="ab" style="left:148px;top:95.5px;width:768px;height:0.9px;background:#d9d9d9"></div>
<div class="ab" style="left:148px;top:96.4px;width:768px;height:16px;background:linear-gradient(#fdfdfd,#f1f1f1)"></div>
<div class="ab" style="left:148px;top:112px;width:768px;height:0.9px;background:#e2e2e2"></div>
<div class="ab" style="left:220.15px;top:96.4px;width:0.9px;height:16px;background:#e0e0e0"></div>
<div class="t" style="left:147.9px;width:72.25px;top:99.2px;text-align:center;color:#333;font-size:8.4px">生产场地</div>
<div class="ab" style="left:304.05px;top:96.4px;width:0.9px;height:16px;background:#e0e0e0"></div>
<div class="t" style="left:220.15px;width:83.9px;top:99.2px;text-align:center;color:#333;font-size:8.4px">设备编号</div>
<div class="ab" style="left:388.15px;top:96.4px;width:0.9px;height:16px;background:#e0e0e0"></div>
<div class="t" style="left:304.05px;width:84.09999999999997px;top:99.2px;text-align:center;color:#333;font-size:8.4px">设备类型</div>
<div class="ab" style="left:451.05px;top:96.4px;width:0.9px;height:16px;background:#e0e0e0"></div>
<div class="t" style="left:388.15px;width:62.900000000000034px;top:99.2px;text-align:center;color:#333;font-size:8.4px">设备品牌</div>
<div class="ab" style="left:528.05px;top:96.4px;width:0.9px;height:16px;background:#e0e0e0"></div>
<div class="t" style="left:451.05px;width:76.99999999999994px;top:99.2px;text-align:center;color:#333;font-size:8.4px">设备型号</div>
<div class="ab" style="left:587.65px;top:96.4px;width:0.9px;height:16px;background:#e0e0e0"></div>
<div class="t" style="left:528.05px;width:59.60000000000002px;top:99.2px;text-align:center;color:#333;font-size:8.4px">设备名称</div>
<div class="ab" style="left:657.65px;top:96.4px;width:0.9px;height:16px;background:#e0e0e0"></div>
<div class="t" style="left:587.65px;width:70.0px;top:99.2px;text-align:center;color:#333;font-size:8.4px">设备使用状态</div>
<div class="ab" style="left:713.55px;top:96.4px;width:0.9px;height:16px;background:#e0e0e0"></div>
<div class="t" style="left:657.65px;width:55.89999999999998px;top:99.2px;text-align:center;color:#333;font-size:8.4px">吨位(T)</div>
<div class="ab" style="left:804.45px;top:96.4px;width:0.9px;height:16px;background:#e0e0e0"></div>
<div class="t" style="left:713.55px;width:90.90000000000009px;top:99.2px;text-align:center;color:#333;font-size:8.4px">制造商</div>
<div class="ab" style="left:895.45px;top:96.4px;width:0.9px;height:16px;background:#e0e0e0"></div>
<div class="t" style="left:804.45px;width:91.0px;top:99.2px;text-align:center;color:#333;font-size:8.4px">出厂编号</div>
<div class="ab" style="left:148px;top:112.9px;width:758px;height:297.0px;overflow:hidden">
<div class="ab" style="left:0;top:0.0px;width:758px;height:17.48px;background:#6ecbf5;border-bottom:0.9px solid #e6e6e6"></div>
<div class="t" style="left:2.100000000000006px;width:69.95px;overflow:hidden;top:3.8px;color:#1a1a1a">注塑车间</div>
<div class="t" style="left:75.75px;width:81.60000000000001px;overflow:hidden;top:3.8px;color:#1a1a1a">1#</div>
<div class="t" style="left:159.25px;width:81.79999999999997px;overflow:hidden;top:3.8px;color:#1a1a1a">注塑机</div>
<div class="t" style="left:243.34999999999997px;width:60.60000000000004px;overflow:hidden;top:3.8px;color:#1a1a1a">海天</div>
<div class="t" style="left:306.65000000000003px;width:74.69999999999995px;overflow:hidden;top:3.8px;color:#1a1a1a">FE260-1400S</div>
<div class="t" style="left:383.65px;width:57.300000000000026px;overflow:hidden;top:3.8px;color:#1a1a1a">1# 注塑机</div>
<div class="t" style="right:195.40000000000003px;top:3.8px;color:#1a1a1a">120</div>
<div class="t" style="left:569.2px;top:3.8px;color:#1a1a1a">制造商D1</div>
<div class="t" style="left:659.9000000000001px;top:3.8px;color:#1a1a1a">S0260K0001</div>
<div class="t" style="left:750.6px;top:3.8px;color:#1a1a1a">JC</div>
<div class="ab" style="left:0;top:17.48px;width:758px;height:17.48px;background:#f9f9f9;border-bottom:0.9px solid #e6e6e6"></div>
<div class="t" style="left:2.100000000000006px;width:69.95px;overflow:hidden;top:21.28px;color:#1a1a1a">注塑车间</div>
<div class="t" style="left:75.35000000000001px;width:81.60000000000001px;overflow:hidden;top:21.28px;color:#1a1a1a">设备编号-测试工位关联</div>
<div class="t" style="left:159.25px;width:81.79999999999997px;overflow:hidden;top:21.28px;color:#1a1a1a">注塑机</div>
<div class="t" style="left:243.74999999999997px;width:60.60000000000004px;overflow:hidden;top:21.28px;color:#1a1a1a">Tederic</div>
<div class="t" style="left:306.25px;width:74.69999999999995px;overflow:hidden;top:21.28px;color:#1a1a1a"></div>
<div class="t" style="left:383.24999999999994px;width:57.300000000000026px;overflow:hidden;top:21.28px;color:#1a1a1a">设备名称-测试工位</div>
<div class="ab" style="left:0;top:34.96px;width:758px;height:17.48px;background:#fff;border-bottom:0.9px solid #e6e6e6"></div>
<div class="t" style="left:2.100000000000006px;width:69.95px;overflow:hidden;top:38.76px;color:#1a1a1a">注塑车间</div>
<div class="t" style="left:75.75px;width:81.60000000000001px;overflow:hidden;top:38.76px;color:#1a1a1a">2#</div>
<div class="t" style="left:159.25px;width:81.79999999999997px;overflow:hidden;top:38.76px;color:#1a1a1a">注塑机</div>
<div class="t" style="left:243.34999999999997px;width:60.60000000000004px;overflow:hidden;top:38.76px;color:#1a1a1a">朗格</div>
<div class="t" style="left:306.65000000000003px;width:74.69999999999995px;overflow:hidden;top:38.76px;color:#1a1a1a">FE260-1400S</div>
<div class="t" style="left:383.65px;width:57.300000000000026px;overflow:hidden;top:38.76px;color:#1a1a1a">2# 注塑机</div>
<div class="t" style="right:195.40000000000003px;top:38.76px;color:#1a1a1a">120</div>
<div class="t" style="left:750.6px;top:38.76px;color:#1a1a1a">JC</div>
<div class="ab" style="left:0;top:52.44px;width:758px;height:17.48px;background:#f9f9f9;border-bottom:0.9px solid #e6e6e6"></div>
<div class="t" style="left:2.100000000000006px;width:69.95px;overflow:hidden;top:56.239999999999995px;color:#1a1a1a">注塑车间</div>
<div class="t" style="left:75.75px;width:81.60000000000001px;overflow:hidden;top:56.239999999999995px;color:#1a1a1a">3#</div>
<div class="t" style="left:159.25px;width:81.79999999999997px;overflow:hidden;top:56.239999999999995px;color:#1a1a1a">注塑机</div>
<div class="t" style="left:243.34999999999997px;width:60.60000000000004px;overflow:hidden;top:56.239999999999995px;color:#1a1a1a">朗格</div>
<div class="t" style="left:306.65000000000003px;width:74.69999999999995px;overflow:hidden;top:56.239999999999995px;color:#1a1a1a">FE260-1400D</div>
<div class="t" style="left:383.65px;width:57.300000000000026px;overflow:hidden;top:56.239999999999995px;color:#1a1a1a">3# 注塑机</div>
<div class="t" style="right:195.40000000000003px;top:56.239999999999995px;color:#1a1a1a">120</div>
<div class="ab" style="left:0;top:69.92px;width:758px;height:17.48px;background:#fff;border-bottom:0.9px solid #e6e6e6"></div>
<div class="t" style="left:2.100000000000006px;width:69.95px;overflow:hidden;top:73.72px;color:#1a1a1a">注塑车间</div>
<div class="t" style="left:75.75px;width:81.60000000000001px;overflow:hidden;top:73.72px;color:#1a1a1a">4#</div>
<div class="t" style="left:159.25px;width:81.79999999999997px;overflow:hidden;top:73.72px;color:#1a1a1a">注塑机</div>
<div class="t" style="left:243.34999999999997px;width:60.60000000000004px;overflow:hidden;top:73.72px;color:#1a1a1a">震雄</div>
<div class="t" style="left:306.65000000000003px;width:74.69999999999995px;overflow:hidden;top:73.72px;color:#1a1a1a">FE260-1400D</div>
<div class="t" style="left:383.65px;width:57.300000000000026px;overflow:hidden;top:73.72px;color:#1a1a1a">4# 注塑机</div>
<div class="t" style="right:195.40000000000003px;top:73.72px;color:#1a1a1a">240</div>
<div class="t" style="left:659.9000000000001px;top:73.72px;color:#1a1a1a">S0260K0002</div>
<div class="t" style="left:750.6px;top:73.72px;color:#1a1a1a">JC</div>
<div class="ab" style="left:0;top:87.4px;width:758px;height:17.48px;background:#f9f9f9;border-bottom:0.9px solid #e6e6e6"></div>
<div class="t" style="left:2.100000000000006px;width:69.95px;overflow:hidden;top:91.2px;color:#1a1a1a">注塑车间</div>
<div class="t" style="left:75.75px;width:81.60000000000001px;overflow:hidden;top:91.2px;color:#1a1a1a">5#</div>
<div class="t" style="left:159.25px;width:81.79999999999997px;overflow:hidden;top:91.2px;color:#1a1a1a">注塑机</div>
<div class="t" style="left:243.34999999999997px;width:60.60000000000004px;overflow:hidden;top:91.2px;color:#1a1a1a">朗格</div>
<div class="t" style="left:306.65000000000003px;width:74.69999999999995px;overflow:hidden;top:91.2px;color:#1a1a1a">FE260-1400D</div>
<div class="t" style="left:383.65px;width:57.300000000000026px;overflow:hidden;top:91.2px;color:#1a1a1a">5# 注塑机</div>
<div class="t" style="right:195.40000000000003px;top:91.2px;color:#1a1a1a">260</div>
<div class="ab" style="left:0;top:104.88px;width:758px;height:17.48px;background:#fff;border-bottom:0.9px solid #e6e6e6"></div>
<div class="t" style="left:2.100000000000006px;width:69.95px;overflow:hidden;top:108.67999999999999px;color:#1a1a1a">注塑车间</div>
<div class="t" style="left:75.75px;width:81.60000000000001px;overflow:hidden;top:108.67999999999999px;color:#1a1a1a">6#</div>
<div class="t" style="left:159.25px;width:81.79999999999997px;overflow:hidden;top:108.67999999999999px;color:#1a1a1a">注塑机</div>
<div class="t" style="left:243.34999999999997px;width:60.60000000000004px;overflow:hidden;top:108.67999999999999px;color:#1a1a1a">朗格</div>
<div class="t" style="left:306.65000000000003px;width:74.69999999999995px;overflow:hidden;top:108.67999999999999px;color:#1a1a1a">FE260-1400D</div>
<div class="t" style="left:383.65px;width:57.300000000000026px;overflow:hidden;top:108.67999999999999px;color:#1a1a1a">6# 注塑机</div>
<div class="t" style="right:195.40000000000003px;top:108.67999999999999px;color:#1a1a1a">260</div>
<div class="ab" style="left:0;top:122.36px;width:758px;height:17.48px;background:#f9f9f9;border-bottom:0.9px solid #e6e6e6"></div>
<div class="t" style="left:2.100000000000006px;width:69.95px;overflow:hidden;top:126.16px;color:#1a1a1a">注塑车间</div>
<div class="t" style="left:75.75px;width:81.60000000000001px;overflow:hidden;top:126.16px;color:#1a1a1a">7#</div>
<div class="t" style="left:159.25px;width:81.79999999999997px;overflow:hidden;top:126.16px;color:#1a1a1a">注塑机</div>
<div class="t" style="left:243.34999999999997px;width:60.60000000000004px;overflow:hidden;top:126.16px;color:#1a1a1a">朗格</div>
<div class="t" style="left:306.65000000000003px;width:74.69999999999995px;overflow:hidden;top:126.16px;color:#1a1a1a">FE260-1400D</div>
<div class="t" style="left:383.65px;width:57.300000000000026px;overflow:hidden;top:126.16px;color:#1a1a1a">7# 注塑机</div>
<div class="t" style="right:195.40000000000003px;top:126.16px;color:#1a1a1a">260</div>
<div class="ab" style="left:0;top:139.84px;width:758px;height:17.48px;background:#fff;border-bottom:0.9px solid #e6e6e6"></div>
<div class="t" style="left:2.100000000000006px;width:69.95px;overflow:hidden;top:143.64000000000001px;color:#1a1a1a">注塑车间</div>
<div class="t" style="left:75.75px;width:81.60000000000001px;overflow:hidden;top:143.64000000000001px;color:#1a1a1a">8#</div>
<div class="t" style="left:159.25px;width:81.79999999999997px;overflow:hidden;top:143.64000000000001px;color:#1a1a1a">注塑机</div>
<div class="t" style="left:243.34999999999997px;width:60.60000000000004px;overflow:hidden;top:143.64000000000001px;color:#1a1a1a">朗格</div>
<div class="t" style="left:306.65000000000003px;width:74.69999999999995px;overflow:hidden;top:143.64000000000001px;color:#1a1a1a">FE260-1400D</div>
<div class="t" style="left:383.65px;width:57.300000000000026px;overflow:hidden;top:143.64000000000001px;color:#1a1a1a">8# 注塑机</div>
<div class="t" style="right:195.40000000000003px;top:143.64000000000001px;color:#1a1a1a">260</div>
<div class="ab" style="left:0;top:157.32px;width:758px;height:17.48px;background:#f9f9f9;border-bottom:0.9px solid #e6e6e6"></div>
<div class="t" style="left:2.100000000000006px;width:69.95px;overflow:hidden;top:161.12px;color:#1a1a1a">注塑车间</div>
<div class="t" style="left:75.75px;width:81.60000000000001px;overflow:hidden;top:161.12px;color:#1a1a1a">9#</div>
<div class="t" style="left:159.25px;width:81.79999999999997px;overflow:hidden;top:161.12px;color:#1a1a1a">注塑机</div>
<div class="t" style="left:243.34999999999997px;width:60.60000000000004px;overflow:hidden;top:161.12px;color:#1a1a1a">朗格</div>
<div class="t" style="left:306.65000000000003px;width:74.69999999999995px;overflow:hidden;top:161.12px;color:#1a1a1a">FE260-1400D</div>
<div class="t" style="left:383.65px;width:57.300000000000026px;overflow:hidden;top:161.12px;color:#1a1a1a">9# 注塑机</div>
<div class="t" style="right:195.40000000000003px;top:161.12px;color:#1a1a1a">260</div>
<div class="ab" style="left:0;top:174.8px;width:758px;height:17.48px;background:#fff;border-bottom:0.9px solid #e6e6e6"></div>
<div class="t" style="left:2.100000000000006px;width:69.95px;overflow:hidden;top:178.60000000000002px;color:#1a1a1a">注塑车间</div>
<div class="t" style="left:75.75px;width:81.60000000000001px;overflow:hidden;top:178.60000000000002px;color:#1a1a1a">10#</div>
<div class="t" style="left:159.25px;width:81.79999999999997px;overflow:hidden;top:178.60000000000002px;color:#1a1a1a">注塑机</div>
<div class="t" style="left:243.34999999999997px;width:60.60000000000004px;overflow:hidden;top:178.60000000000002px;color:#1a1a1a">朗格</div>
<div class="t" style="left:306.65000000000003px;width:74.69999999999995px;overflow:hidden;top:178.60000000000002px;color:#1a1a1a">FE260-1400D</div>
<div class="t" style="left:383.65px;width:57.300000000000026px;overflow:hidden;top:178.60000000000002px;color:#1a1a1a">10# 注塑机</div>
<div class="t" style="right:195.40000000000003px;top:178.60000000000002px;color:#1a1a1a">260</div>
<div class="ab" style="left:0;top:192.28px;width:758px;height:17.48px;background:#f9f9f9;border-bottom:0.9px solid #e6e6e6"></div>
<div class="t" style="left:2.100000000000006px;width:69.95px;overflow:hidden;top:196.08px;color:#1a1a1a">注塑车间</div>
<div class="t" style="left:75.75px;width:81.60000000000001px;overflow:hidden;top:196.08px;color:#1a1a1a">11#</div>
<div class="t" style="left:159.25px;width:81.79999999999997px;overflow:hidden;top:196.08px;color:#1a1a1a">注塑机</div>
<div class="t" style="left:243.34999999999997px;width:60.60000000000004px;overflow:hidden;top:196.08px;color:#1a1a1a">朗格</div>
<div class="t" style="left:306.65000000000003px;width:74.69999999999995px;overflow:hidden;top:196.08px;color:#1a1a1a">FE260-1400D</div>
<div class="t" style="left:383.65px;width:57.300000000000026px;overflow:hidden;top:196.08px;color:#1a1a1a">11# 注塑机</div>
<div class="t" style="right:195.40000000000003px;top:196.08px;color:#1a1a1a">260</div>
<div class="ab" style="left:0;top:209.76px;width:758px;height:17.48px;background:#fff;border-bottom:0.9px solid #e6e6e6"></div>
<div class="t" style="left:2.100000000000006px;width:69.95px;overflow:hidden;top:213.56px;color:#1a1a1a">注塑车间</div>
<div class="t" style="left:75.75px;width:81.60000000000001px;overflow:hidden;top:213.56px;color:#1a1a1a">12#</div>
<div class="t" style="left:159.25px;width:81.79999999999997px;overflow:hidden;top:213.56px;color:#1a1a1a">注塑机</div>
<div class="t" style="left:243.34999999999997px;width:60.60000000000004px;overflow:hidden;top:213.56px;color:#1a1a1a">朗格</div>
<div class="t" style="left:306.65000000000003px;width:74.69999999999995px;overflow:hidden;top:213.56px;color:#1a1a1a">FE260-1400D</div>
<div class="t" style="left:383.65px;width:57.300000000000026px;overflow:hidden;top:213.56px;color:#1a1a1a">12# 注塑机</div>
<div class="t" style="right:195.40000000000003px;top:213.56px;color:#1a1a1a">260</div>
<div class="ab" style="left:0;top:227.24px;width:758px;height:17.48px;background:#f9f9f9;border-bottom:0.9px solid #e6e6e6"></div>
<div class="t" style="left:2.100000000000006px;width:69.95px;overflow:hidden;top:231.04000000000002px;color:#1a1a1a">注塑车间</div>
<div class="t" style="left:75.75px;width:81.60000000000001px;overflow:hidden;top:231.04000000000002px;color:#1a1a1a">13#</div>
<div class="t" style="left:159.25px;width:81.79999999999997px;overflow:hidden;top:231.04000000000002px;color:#1a1a1a">注塑机</div>
<div class="t" style="left:243.34999999999997px;width:60.60000000000004px;overflow:hidden;top:231.04000000000002px;color:#1a1a1a">朗格</div>
<div class="t" style="left:306.65000000000003px;width:74.69999999999995px;overflow:hidden;top:231.04000000000002px;color:#1a1a1a">FE260-1400D</div>
<div class="t" style="left:383.65px;width:57.300000000000026px;overflow:hidden;top:231.04000000000002px;color:#1a1a1a">13# 注塑机</div>
<div class="t" style="right:195.40000000000003px;top:231.04000000000002px;color:#1a1a1a">260</div>
<div class="ab" style="left:0;top:244.72px;width:758px;height:17.48px;background:#fff;border-bottom:0.9px solid #e6e6e6"></div>
<div class="t" style="left:2.100000000000006px;width:69.95px;overflow:hidden;top:248.52px;color:#1a1a1a">注塑车间</div>
<div class="t" style="left:75.75px;width:81.60000000000001px;overflow:hidden;top:248.52px;color:#1a1a1a">14#</div>
<div class="t" style="left:159.25px;width:81.79999999999997px;overflow:hidden;top:248.52px;color:#1a1a1a">注塑机</div>
<div class="t" style="left:243.34999999999997px;width:60.60000000000004px;overflow:hidden;top:248.52px;color:#1a1a1a">朗格</div>
<div class="t" style="left:306.65000000000003px;width:74.69999999999995px;overflow:hidden;top:248.52px;color:#1a1a1a">FE260-1400D</div>
<div class="t" style="left:383.65px;width:57.300000000000026px;overflow:hidden;top:248.52px;color:#1a1a1a">14# 注塑机</div>
<div class="t" style="right:195.40000000000003px;top:248.52px;color:#1a1a1a">260</div>
<div class="ab" style="left:0;top:262.2px;width:758px;height:17.48px;background:#f9f9f9;border-bottom:0.9px solid #e6e6e6"></div>
<div class="t" style="left:2.100000000000006px;width:69.95px;overflow:hidden;top:266.0px;color:#1a1a1a">注塑车间</div>
<div class="t" style="left:75.75px;width:81.60000000000001px;overflow:hidden;top:266.0px;color:#1a1a1a">15#</div>
<div class="t" style="left:159.25px;width:81.79999999999997px;overflow:hidden;top:266.0px;color:#1a1a1a">注塑机</div>
<div class="t" style="left:243.34999999999997px;width:60.60000000000004px;overflow:hidden;top:266.0px;color:#1a1a1a">朗格</div>
<div class="t" style="left:306.65000000000003px;width:74.69999999999995px;overflow:hidden;top:266.0px;color:#1a1a1a">FE260-1400D</div>
<div class="t" style="left:383.65px;width:57.300000000000026px;overflow:hidden;top:266.0px;color:#1a1a1a">15# 注塑机</div>
<div class="t" style="right:195.40000000000003px;top:266.0px;color:#1a1a1a">260</div>
<div class="ab" style="left:0;top:279.68px;width:758px;height:17.48px;background:#fff;border-bottom:0.9px solid #e6e6e6"></div>
<div class="t" style="left:2.100000000000006px;width:69.95px;overflow:hidden;top:283.48px;color:#1a1a1a">注塑车间</div>
<div class="t" style="left:75.75px;width:81.60000000000001px;overflow:hidden;top:283.48px;color:#1a1a1a">16#</div>
<div class="t" style="left:159.25px;width:81.79999999999997px;overflow:hidden;top:283.48px;color:#1a1a1a">注塑机</div>
<div class="t" style="left:243.34999999999997px;width:60.60000000000004px;overflow:hidden;top:283.48px;color:#1a1a1a">朗格</div>
<div class="t" style="left:306.65000000000003px;width:74.69999999999995px;overflow:hidden;top:283.48px;color:#1a1a1a">FE260-1400D</div>
<div class="t" style="left:383.65px;width:57.300000000000026px;overflow:hidden;top:283.48px;color:#1a1a1a">16# 注塑机</div>
<div class="t" style="right:195.40000000000003px;top:283.48px;color:#1a1a1a">260</div>
<div class="ab" style="left:72.15px;top:0;width:0.9px;height:300px;background:#e8e8e8"></div>
<div class="ab" style="left:156.05px;top:0;width:0.9px;height:300px;background:#e8e8e8"></div>
<div class="ab" style="left:240.14999999999998px;top:0;width:0.9px;height:300px;background:#e8e8e8"></div>
<div class="ab" style="left:303.05px;top:0;width:0.9px;height:300px;background:#e8e8e8"></div>
<div class="ab" style="left:380.04999999999995px;top:0;width:0.9px;height:300px;background:#e8e8e8"></div>
<div class="ab" style="left:439.65px;top:0;width:0.9px;height:300px;background:#e8e8e8"></div>
<div class="ab" style="left:509.65px;top:0;width:0.9px;height:300px;background:#e8e8e8"></div>
<div class="ab" style="left:565.55px;top:0;width:0.9px;height:300px;background:#e8e8e8"></div>
<div class="ab" style="left:656.45px;top:0;width:0.9px;height:300px;background:#e8e8e8"></div>
<div class="ab" style="left:747.45px;top:0;width:0.9px;height:300px;background:#e8e8e8"></div>
<div class="ab" style="left:440.1px;top:0.0px;width:69.89999999999998px;height:17.48px;background:#44bee6;box-shadow:inset 0 -0.9px 0 rgba(255,255,255,0.22)"></div><div class="t b" style="left:443.4px;top:3.8px;color:#fff">正常</div><div class="ab" style="left:440.1px;top:17.48px;width:69.89999999999998px;height:17.48px;background:#44bee6;box-shadow:inset 0 -0.9px 0 rgba(255,255,255,0.22)"></div><div class="t b" style="left:443.4px;top:21.28px;color:#fff">正常</div><div class="ab" style="left:440.1px;top:34.96px;width:69.89999999999998px;height:17.48px;background:#44bee6;box-shadow:inset 0 -0.9px 0 rgba(255,255,255,0.22)"></div><div class="t b" style="left:443.4px;top:38.76px;color:#fff">正常</div><div class="ab" style="left:440.1px;top:52.44px;width:69.89999999999998px;height:17.48px;background:#44bee6;box-shadow:inset 0 -0.9px 0 rgba(255,255,255,0.22)"></div><div class="t b" style="left:443.4px;top:56.239999999999995px;color:#fff">正常</div><div class="ab" style="left:440.1px;top:69.92px;width:69.89999999999998px;height:17.48px;background:#44bee6;box-shadow:inset 0 -0.9px 0 rgba(255,255,255,0.22)"></div><div class="t b" style="left:443.4px;top:73.72px;color:#fff">正常</div><div class="ab" style="left:440.1px;top:87.4px;width:69.89999999999998px;height:17.48px;background:#44bee6;box-shadow:inset 0 -0.9px 0 rgba(255,255,255,0.22)"></div><div class="t b" style="left:443.4px;top:91.2px;color:#fff">正常</div><div class="ab" style="left:440.1px;top:104.88px;width:69.89999999999998px;height:17.48px;background:#44bee6;box-shadow:inset 0 -0.9px 0 rgba(255,255,255,0.22)"></div><div class="t b" style="left:443.4px;top:108.67999999999999px;color:#fff">正常</div><div class="ab" style="left:440.1px;top:122.36px;width:69.89999999999998px;height:17.48px;background:#44bee6;box-shadow:inset 0 -0.9px 0 rgba(255,255,255,0.22)"></div><div class="t b" style="left:443.4px;top:126.16px;color:#fff">正常</div><div class="ab" style="left:440.1px;top:139.84px;width:69.89999999999998px;height:17.48px;background:#44bee6;box-shadow:inset 0 -0.9px 0 rgba(255,255,255,0.22)"></div><div class="t b" style="left:443.4px;top:143.64000000000001px;color:#fff">正常</div><div class="ab" style="left:440.1px;top:157.32px;width:69.89999999999998px;height:17.48px;background:#44da9e;box-shadow:inset 0 -0.9px 0 rgba(255,255,255,0.22)"></div><div class="t b" style="left:443.4px;top:161.12px;color:#fff">生产</div><div class="ab" style="left:440.1px;top:174.8px;width:69.89999999999998px;height:17.48px;background:#44bee6;box-shadow:inset 0 -0.9px 0 rgba(255,255,255,0.22)"></div><div class="t b" style="left:443.4px;top:178.60000000000002px;color:#fff">正常</div><div class="ab" style="left:440.1px;top:192.28px;width:69.89999999999998px;height:17.48px;background:#44bee6;box-shadow:inset 0 -0.9px 0 rgba(255,255,255,0.22)"></div><div class="t b" style="left:443.4px;top:196.08px;color:#fff">正常</div><div class="ab" style="left:440.1px;top:209.76px;width:69.89999999999998px;height:17.48px;background:#44bee6;box-shadow:inset 0 -0.9px 0 rgba(255,255,255,0.22)"></div><div class="t b" style="left:443.4px;top:213.56px;color:#fff">正常</div><div class="ab" style="left:440.1px;top:227.24px;width:69.89999999999998px;height:17.48px;background:#44bee6;box-shadow:inset 0 -0.9px 0 rgba(255,255,255,0.22)"></div><div class="t b" style="left:443.4px;top:231.04000000000002px;color:#fff">正常</div><div class="ab" style="left:440.1px;top:244.72px;width:69.89999999999998px;height:17.48px;background:#44bee6;box-shadow:inset 0 -0.9px 0 rgba(255,255,255,0.22)"></div><div class="t b" style="left:443.4px;top:248.52px;color:#fff">正常</div><div class="ab" style="left:440.1px;top:262.2px;width:69.89999999999998px;height:17.48px;background:#44bee6;box-shadow:inset 0 -0.9px 0 rgba(255,255,255,0.22)"></div><div class="t b" style="left:443.4px;top:266.0px;color:#fff">正常</div><div class="ab" style="left:440.1px;top:279.68px;width:69.89999999999998px;height:17.48px;background:#44bee6;box-shadow:inset 0 -0.9px 0 rgba(255,255,255,0.22)"></div><div class="t b" style="left:443.4px;top:283.48px;color:#fff">正常</div>
</div>
<div class="ab" style="left:906px;top:112.4px;width:10px;height:297.5px;background:#fdfdfd"></div>
<svg style="left:908.2px;top:115.8px;" width="7" height="5" viewBox="0 0 7 5"><path d="M0 4.5 L3.3 0.5 L6.6 4.5 Z" fill="#8a8a8a"/></svg>
<div class="ab" style="left:908px;top:125.8px;width:6.3px;height:140.5px;background:#8c8c8c;border-radius:3.2px"></div>
<svg style="left:908.2px;top:403.8px;" width="7" height="5" viewBox="0 0 7 5"><path d="M0 0.5 L3.3 4.5 L6.6 0.5 Z" fill="#8a8a8a"/></svg>
<div class="ab" style="left:148px;top:409.9px;width:768px;height:12.5px;background:#fafafa"></div>
<div class="ab" style="left:148px;top:409.5px;width:758px;height:0.9px;background:#e6e6e6"></div>
<div class="ab" style="left:588.1px;top:409.5px;width:69.9px;height:1.9px;background:#44bee6"></div>
<svg style="left:150.2px;top:414px;" width="6" height="7" viewBox="0 0 6 7"><path d="M5 0 L0.5 3.3 L5 6.6 Z" fill="#8a8a8a"/></svg>
<div class="ab" style="left:160.2px;top:414.3px;width:369.3px;height:5.9px;background:#8c8c8c;border-radius:3px"></div>
<svg style="left:898px;top:413.6px;" width="6" height="7" viewBox="0 0 6 7"><path d="M0.5 0 L5 3.3 L0.5 6.6 Z" fill="#8a8a8a"/></svg>
<div class="ab" style="left:148px;top:422.4px;width:768px;height:0.9px;background:#e0e0e0"></div>
<div class="ab" style="left:148px;top:423.1px;width:768px;height:20.3px;background:#f7f7f7"></div>
<div class="ab" style="left:148px;top:443.4px;width:768px;height:1.6px;background:#dedede"></div>
<div class="ab" style="left:152.3px;top:426px;width:38.5px;height:14.9px;background:#fff;border:1px solid #cfcfcf;border-radius:2px"></div>
<div class="t" style="left:157.1px;top:429.5px;color:#222;font-size:10.4px;transform:scaleX(0.9);transform-origin:0 0">100</div>
<svg style="left:181.6px;top:431.5px;" width="7" height="5" viewBox="0 0 7 5"><path d="M0.5 0.5 L3.3 3.5 L6.1 0.5" fill="none" stroke="#222" stroke-width="1.3"/></svg>
<div class="ab" style="left:196px;top:426.5px;width:0.9px;height:14px;background:#d6d6d6"></div>
<div class="ab" style="left:235.2px;top:426.5px;width:0.9px;height:14px;background:#d6d6d6"></div>
<div class="ab" style="left:303.2px;top:426.5px;width:0.9px;height:14px;background:#d6d6d6"></div>
<div class="ab" style="left:341px;top:426.5px;width:0.9px;height:14px;background:#d6d6d6"></div>
<svg style="left:203.8px;top:429.3px;" width="7" height="8" viewBox="0 0 7 8"><rect x="0" y="0" width="1.2" height="7.3" fill="#a0a0a0"/><path d="M6.6 0 L2 3.65 L6.6 7.3 Z" fill="#a0a0a0"/></svg>
<svg style="left:222.9px;top:429.3px;" width="6" height="8" viewBox="0 0 6 8"><path d="M5.2 0 L0.6 3.65 L5.2 7.3 Z" fill="#a0a0a0"/></svg>
<div class="t" style="left:240.2px;top:428.6px;color:#222">第</div>
<div class="ab" style="left:250.9px;top:426px;width:22.7px;height:14.9px;background:#fff;border:1px solid #cfcfcf"></div>
<div class="t" style="left:254px;top:428.6px;color:#222">1</div>
<div class="t" style="left:275.2px;top:428.6px;color:#222">共1页</div>
<svg style="left:311px;top:429.3px;" width="6" height="8" viewBox="0 0 6 8"><path d="M0.6 0 L5.2 3.65 L0.6 7.3 Z" fill="#a0a0a0"/></svg>
<svg style="left:328px;top:429.3px;" width="7" height="8" viewBox="0 0 7 8"><path d="M0 0 L4.6 3.65 L0 7.3 Z" fill="#a0a0a0"/><rect x="5.4" y="0" width="1.2" height="7.3" fill="#a0a0a0"/></svg>
<svg style="left:349px;top:429.2px;" width="8" height="8" viewBox="0 0 8 8"><path d="M6.5 3.2 A3.1 3.1 0 1 1 4.2 0.9" fill="none" stroke="#444" stroke-width="1.2"/><path d="M3.6 -0.6 L6 1 L3.8 2.7 Z" fill="#444"/></svg>
<div class="t" style="right:5.5px;top:428.6px;color:#222">显示1到33,共33记录</div>
</body></html>
